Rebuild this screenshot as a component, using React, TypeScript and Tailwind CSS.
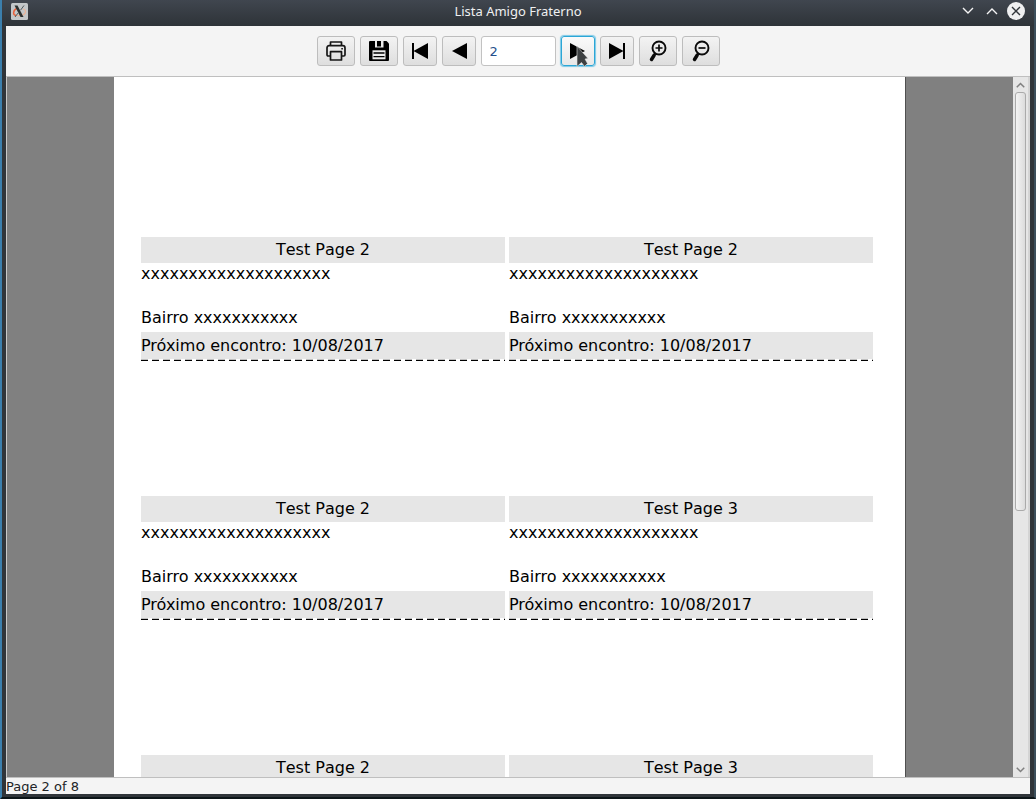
import type { ReactNode } from "react";

const toolButton =
  "flex h-[30px] shrink-0 items-center justify-center rounded-[3px] border border-[#bdbdbd] bg-linear-to-b from-[#f3f3f3] to-[#dedede] text-black";

type ToolProps = { label: string; wide?: boolean; focused?: boolean; children: ReactNode };

function Tool({ label, wide, focused, children }: ToolProps) {
  const width = wide ? "w-[38px]" : "w-[34px]";
  const ring = focused ? "border-[#2ba6d6]! shadow-[0_0_1px_1px_#7cc8e6] relative from-[#fafafa]! to-[#e8e8e8]!" : "";
  return (
    <button type="button" aria-label={label} className={`${toolButton} ${width} ${ring}`}>
      {children}
    </button>
  );
}

function PrintIcon() {
  return (
    <svg width="20" height="20" viewBox="0 0 20 20" fill="none" stroke="#161616" strokeWidth="1.700" strokeLinejoin="round">
      <path d="M4.500 4.500V1h11v3.500" />
      <path d="M4.500 15H2.200Q1 15 1 13.800V7Q1 4.700 3.200 4.700h13.600Q19 4.700 19 7v6.800q0 1.200-1.200 1.200H15.500" />
      <path d="M4.500 10.700h11V19h-11z" />
      <path d="M15.300 7h1.600v1.600h-1.600z" fill="#161616" stroke="none" />
    </svg>
  );
}

function SaveIcon() {
  return (
    <svg width="20" height="20" viewBox="0 0 20 20">
      <path d="M1 0h16.500L20 2.500V19q0 1-1 1H1q-1 0-1-1V1q0-1 1-1z" fill="#000" />
      <path d="M6 0h8.500v6.500H6z" fill="#ececec" />
      <path d="M8 0h4v5.500H8z" fill="#000" />
      <path d="M3.500 9.300h13v9h-13z" fill="#ececec" />
      <path d="M4.500 12h11M4.500 15.600h11" stroke="#000" strokeWidth="1.300" />
    </svg>
  );
}

function SkipIcon({ flipped }: { flipped?: boolean }) {
  return (
    <svg width="16" height="18" viewBox="0 0 16 18" className={flipped ? "-scale-x-100" : ""}>
      <path d="M0 1h2v16H0zM16 1v16L1.500 9z" fill="#000" />
    </svg>
  );
}

function StepIcon({ flipped }: { flipped?: boolean }) {
  return (
    <svg width="16" height="18" viewBox="0 0 16 18" className={flipped ? "-scale-x-100" : ""}>
      <path d="M16 1v16L1 9z" fill="#000" />
    </svg>
  );
}

function ZoomIcon({ plus }: { plus?: boolean }) {
  return (
    <svg width="18" height="22" viewBox="0 0 18 22" fill="none" stroke="#0a0a0a">
      <circle cx="10" cy="8" r="6.500" strokeWidth="1.900" />
      <path d={plus ? "M6.500 8h7M10 4.500v7" : "M6.500 8h7"} strokeWidth="1.700" />
      <path d="M6.500 13L4.500 16" strokeWidth="2.500" />
      <path d="M5 15.500L2.500 19.500" strokeWidth="3.500" strokeLinecap="round" />
    </svg>
  );
}

function Chevron({ up, light }: { up?: boolean; light?: boolean }) {
  return (
    <svg
      width={light ? 12 : 9}
      height={light ? 8 : 6}
      viewBox="0 0 12 8"
      fill="none"
      stroke={light ? "#f4f4f4" : "#808080"}
      strokeWidth={light ? 1.4 : 2}
    >
      <path d={up ? "M1 7l5-5 5 5" : "M1 1l5 5 5-5"} />
    </svg>
  );
}

function TitleBar() {
  return (
    <header className="flex h-[26px] shrink-0 items-center bg-linear-to-b from-[#40464f] to-[#2e3338] px-[9px] pb-[4px]">
      <div className="flex flex-1">
        <svg width="17" height="17" viewBox="0 0 17 17" aria-label="X">
          <rect width="17" height="17" rx="1.500" fill="#c3c7c9" />
          <path d="M5.500 5.500C2 7.500 1.500 12 5 12.500" fill="none" stroke="#e9603a" strokeWidth="1.500" />
          <path d="M6 12.500c5 .8 9-1.500 8.500-4.500-.3-1.200-1.500-1.800-2.500-2" fill="none" stroke="#e8b49a" strokeWidth="1.200" />
          <path d="M3.500 2.500h3l6 11.500H9.500z" fill="#2b302f" />
          <path d="M13 2.500L9.500 7.200M7.500 9.500L4 14" stroke="#50585a" strokeWidth="1" />
        </svg>
      </div>
      <h1 className="text-[13px] leading-5 text-[#eff0f1]">Lista Amigo Fraterno</h1>
      <div className="flex flex-1 items-center justify-end gap-[6px]">
        <button type="button" aria-label="Minimize" className="flex size-[18px] items-center justify-center">
          <Chevron light />
        </button>
        <button type="button" aria-label="Maximize" className="flex size-[18px] items-center justify-center">
          <Chevron light up />
        </button>
        <button type="button" aria-label="Close" className="flex size-[18px] items-center justify-center rounded-full bg-[#eff0f1]">
          <svg width="10" height="10" viewBox="0 0 10 10" stroke="#30353a" strokeWidth="1.400">
            <path d="M1 1l8 8M9 1L1 9" />
          </svg>
        </button>
      </div>
    </header>
  );
}

function Toolbar() {
  return (
    <div className="flex h-[51px] shrink-0 items-center justify-center gap-[5px] border-b border-[#bfbfbf] bg-[#f4f4f4]">
      <Tool label="Print" wide>
        <PrintIcon />
      </Tool>
      <Tool label="Save" wide>
        <SaveIcon />
      </Tool>
      <Tool label="First page">
        <SkipIcon />
      </Tool>
      <Tool label="Previous page">
        <StepIcon />
      </Tool>
      <input
        aria-label="Page number"
        defaultValue="2"
        className="h-[30px] w-[75px] rounded-[3px] border border-[#c2c2c2] bg-white px-2 font-['DejaVu_Sans',sans-serif] text-[13px] text-[#24508c] outline-none"
      />
      <Tool label="Next page" focused>
        <StepIcon flipped />
        <svg width="14" height="22" viewBox="0 0 14 22" className="absolute top-[9px] left-[14px]">
          <path d="M1 0L12 12.500l-3 .5 2.500 4.500-3 3-3-4L1 20.500z" fill="#3d4042" stroke="#e4e4e4" strokeWidth="0.600" />
        </svg>
      </Tool>
      <Tool label="Last page">
        <SkipIcon flipped />
      </Tool>
      <Tool label="Zoom in" wide>
        <ZoomIcon plus />
      </Tool>
      <Tool label="Zoom out" wide>
        <ZoomIcon />
      </Tool>
    </div>
  );
}

type CardData = { title: string; name?: string; district?: string; date?: string };

const person = { name: "xxxxxxxxxxxxxxxxxxxx", district: "Bairro xxxxxxxxxxx", date: "10/08/2017" };

const cards: CardData[] = [
  { title: "Test Page 2", ...person },
  { title: "Test Page 2", ...person },
  { title: "Test Page 2", ...person },
  { title: "Test Page 3", ...person },
  { title: "Test Page 2" },
  { title: "Test Page 3" },
];

function Card({ title, name, district, date }: CardData) {
  return (
    <article className="text-[16px] leading-[26px]">
      <h2 className="bg-[#e6e6e6] text-center [font-kerning:none]">{title}</h2>
      {name && <p className="h-[42px] leading-[22px]">{name}</p>}
      {district && <p className="h-[27px]">{district}</p>}
      {date && (
        <>
          <p className="h-[27px] bg-[#e6e6e6] pt-px">Próximo encontro: {date}</p>
          <svg width="100%" height="2" className="block">
            <line x1="0" y1="1.500" x2="100%" y2="1.500" stroke="#000" strokeWidth="1.400" strokeDasharray="7 4" />
          </svg>
        </>
      )}
    </article>
  );
}

function ScrollBar() {
  return (
    <div className="flex w-[15px] shrink-0 flex-col items-center bg-[#e6e6e6]">
      <button type="button" aria-label="Scroll up" className="flex h-[15px] w-full items-center justify-center">
        <Chevron up />
      </button>
      <div className="flex min-h-0 w-full flex-1 flex-col items-center">
        <div className="h-5/8 w-[11px] rounded-[3px] border border-[#aaaaaa] bg-linear-to-r from-[#f4f4f4] to-[#dcdcdc]" />
      </div>
      <button type="button" aria-label="Scroll down" className="flex h-[15px] w-full items-center justify-center">
        <Chevron />
      </button>
    </div>
  );
}

export default function App() {
  return (
    <div className="flex h-screen flex-col border-r-2 border-b-2 border-l-2 border-r-[#3c4f5c] border-b-[#0c1518] border-l-[#3b7fad] font-['Noto_Sans',sans-serif]">
      <TitleBar />
      <div className="flex min-h-0 flex-1 flex-col bg-[#30353a] px-1 pb-[3px]">
        <Toolbar />
        <main className="flex min-h-0 flex-1 border-r-2 border-l border-r-[#d4d4d4] border-l-[#c8c8c8] bg-[#808080]">
          <div className="flex min-w-0 flex-1 justify-center overflow-hidden">
            <section className="grid w-[792px] auto-rows-[124px] grid-cols-2 gap-x-1 gap-y-[135px] border-r border-[#505050] bg-white pt-[160px] pr-[32px] pl-[27px] font-['DejaVu_Sans',sans-serif] text-black">
              {cards.map((card, index) => (
                <Card key={index} {...card} />
              ))}
            </section>
          </div>
          <ScrollBar />
        </main>
        <footer className="h-[17px] shrink-0 border-t border-[#bfbfbf] bg-[#f4f4f4] font-['DejaVu_Sans',sans-serif] text-[13px] leading-[18px] text-[#222426]">
          Page 2 of 8
        </footer>
      </div>
    </div>
  );
}
